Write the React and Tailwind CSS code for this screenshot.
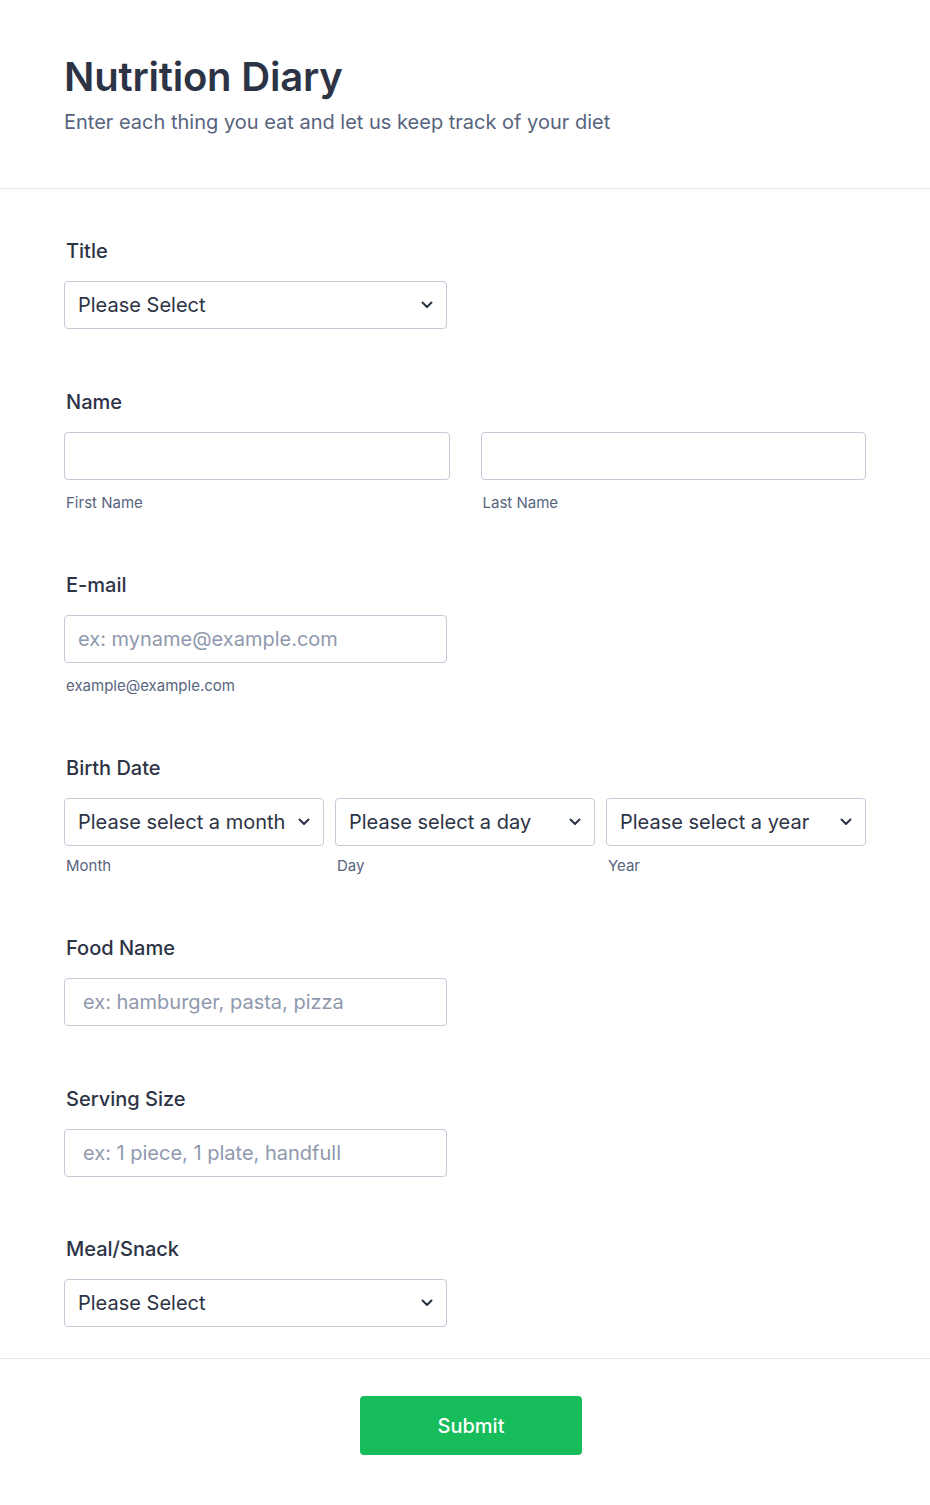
import React from 'react';

const Chevron = () => (
  <svg width="12" height="8" viewBox="0 0 12 8" fill="none" className="shrink-0">
    <path d="M1.5 1.5L6 6l4.5-4.5" stroke="#2c3345" strokeWidth="2" strokeLinecap="round" strokeLinejoin="round" />
  </svg>
);

const Label = ({ children }) => (
  <div className="pl-[2px] h-6 leading-6 text-[20px] font-medium text-[#2c3345]">{children}</div>
);

const Sub = ({ children, className = '' }) => (
  <div className={`pl-[2px] text-[15px] leading-5 text-[#57647e] ${className}`}>{children}</div>
);

const Select = ({ text, className = '' }) => (
  <div
    className={`h-12 flex items-center justify-between pl-[13px] pr-[13px] border border-[#c3cad8] rounded-[4px] bg-white text-[20px] text-[#2c3345] ${className}`}
  >
    <span className="whitespace-nowrap">{text}</span>
    <Chevron />
  </div>
);

const Input = ({ placeholder = '', className = '' }) => (
  <input
    placeholder={placeholder}
    className={`h-12 px-[13px] border border-[#c3cad8] rounded-[4px] bg-white text-[20px] text-[#2c3345] placeholder:text-[#8f99ad] outline-none ${className}`}
  />
);

export default function App() {
  return (
    <div className="min-h-[1505px] bg-white" style={{ fontFamily: 'Inter, "Noto Sans", sans-serif' }}>
      <header className="px-16 pt-[51px] pb-[54px] border-b border-[#e3e5ef]">
        <h1 className="text-[40px] leading-[52px] font-semibold text-[#2c3345] tracking-[-0.2px]">Nutrition Diary</h1>
        <p className="mt-[7px] text-[20px] leading-6 text-[#57647e]">
          Enter each thing you eat and let us keep track of your diet
        </p>
      </header>

      <main className="px-16 pt-[50px] pb-[31px] flex flex-col gap-[60px] border-b border-[#e3e5ef]">
        <div>
          <Label>Title</Label>
          <Select text="Please Select" className="mt-[18px] w-[383px]" />
        </div>

        <div className="pt-[1px]">
          <Label>Name</Label>
          <div className="mt-[18px] grid grid-cols-2 gap-[31px]">
            <div>
              <Input className="w-full" />
              <Sub className="mt-[13px]">First Name</Sub>
            </div>
            <div>
              <Input className="w-full" />
              <Sub className="mt-[13px]">Last Name</Sub>
            </div>
          </div>
        </div>

        <div>
          <Label>E-mail</Label>
          <Input placeholder="ex: myname@example.com" className="mt-[18px] w-[383px]" />
          <Sub className="mt-[13px]">example@example.com</Sub>
        </div>

        <div>
          <Label>Birth Date</Label>
          <div className="mt-[18px] grid grid-cols-3 gap-[11px]">
            <div>
              <Select text="Please select a month" />
              <Sub className="mt-[10px]">Month</Sub>
            </div>
            <div>
              <Select text="Please select a day" />
              <Sub className="mt-[10px]">Day</Sub>
            </div>
            <div>
              <Select text="Please select a year" />
              <Sub className="mt-[10px]">Year</Sub>
            </div>
          </div>
        </div>

        <div>
          <Label>Food Name</Label>
          <Input placeholder="ex: hamburger, pasta, pizza" className="mt-[18px] w-[383px] pl-[18px]" />
        </div>

        <div className="pt-[1px]">
          <Label>Serving Size</Label>
          <Input placeholder="ex: 1 piece, 1 plate, handfull" className="mt-[18px] w-[383px] pl-[18px]" />
        </div>

        <div>
          <Label>Meal/Snack</Label>
          <Select text="Please Select" className="mt-[18px] w-[383px]" />
        </div>
      </main>

      <footer className="pt-[37px] pb-12 flex justify-center pl-[12px]">
        <button className="w-[222px] h-[59px] rounded-[4px] bg-[#18bd5b] text-white text-[20px] font-medium">
          Submit
        </button>
      </footer>
    </div>
  );
}
